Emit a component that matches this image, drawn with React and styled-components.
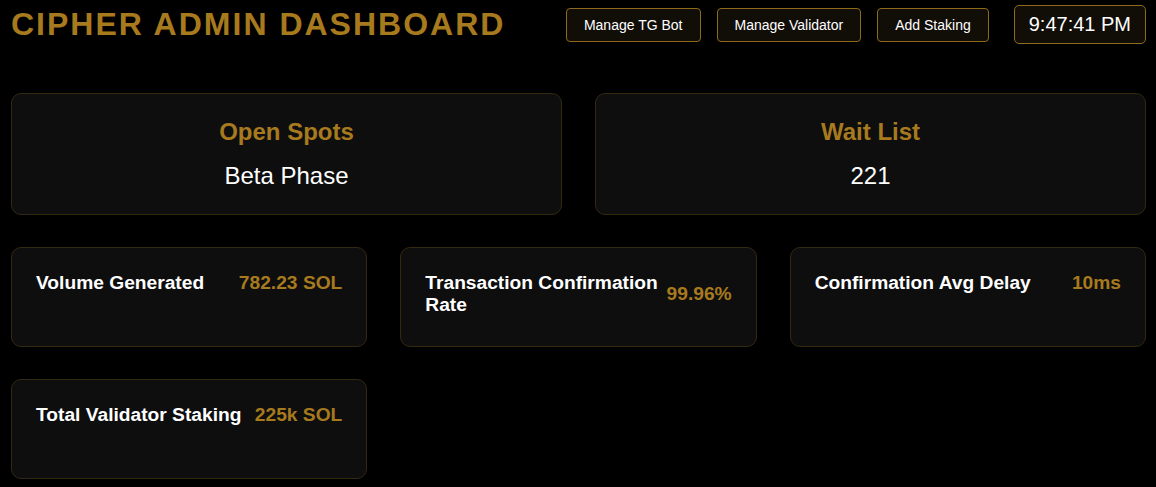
import React, { useState } from "react";
import styled, { createGlobalStyle } from "styled-components";

const GOLD = "#a87a1e";

const stats = [
  { label: "Volume Generated", value: "782.23 SOL" },
  { label: "Transaction Confirmation Rate", value: "99.96%" },
  { label: "Confirmation Avg Delay", value: "10ms" },
  { label: "Total Validator Staking", value: "225k SOL" },
];

export default function App() {
  const [time] = useState("9:47:41 PM");

  return (
    <>
      <GlobalStyle />
      <Page>
        <Header>
          <Title>CIPHER ADMIN DASHBOARD</Title>
          <Actions>
            <ActionButton>Manage TG Bot</ActionButton>
            <ActionButton>Manage Validator</ActionButton>
            <ActionButton>Add Staking</ActionButton>
            <Clock>{time}</Clock>
          </Actions>
        </Header>

        <SpotsRow>
          <SpotCard>
            <SpotTitle>Open Spots</SpotTitle>
            <SpotValue>Beta Phase</SpotValue>
          </SpotCard>
          <SpotCard>
            <SpotTitle>Wait List</SpotTitle>
            <SpotValue>221</SpotValue>
          </SpotCard>
        </SpotsRow>

        <StatsGrid>
          {stats.map((s) => (
            <StatCard key={s.label}>
              <StatRow>
                <StatLabel>{s.label}</StatLabel>
                <StatValue>{s.value}</StatValue>
              </StatRow>
            </StatCard>
          ))}
        </StatsGrid>
      </Page>
    </>
  );
}

const GlobalStyle = createGlobalStyle`
  * { box-sizing: border-box; }
  html, body {
    margin: 0;
    background: #000;
    color: #fff;
    font-family: "Liberation Sans", Arial, sans-serif;
  }
`;

const Page = styled.div`
  padding: 5px 10px 10px 11px;
`;

const Header = styled.header`
  display: flex;
  align-items: center;
  justify-content: space-between;
  height: 39px;
`;

const Title = styled.h1`
  margin: 0;
  font-size: 32px;
  font-weight: bold;
  letter-spacing: 2px;
  color: ${GOLD};
`;

const Actions = styled.div`
  display: flex;
  align-items: center;
  gap: 16px;
`;

const ActionButton = styled.button`
  font-family: inherit;
  font-size: 14px;
  line-height: 16px;
  color: #fff;
  background: #110d07;
  border: 1px solid #8f6a1d;
  border-radius: 4px;
  padding: 8px 17px;
  cursor: pointer;
`;

const Clock = styled.div`
  margin-left: 9px;
  font-size: 20px;
  line-height: 23px;
  color: #fff;
  background: #110d07;
  border: 1px solid #8f6a1d;
  border-radius: 5px;
  padding: 7px 14px;
`;

const SpotsRow = styled.div`
  display: grid;
  grid-template-columns: 1fr 1fr;
  gap: 33px;
  margin-top: 49px;
`;

const Card = styled.div`
  background: #0e0e0e;
  border: 1px solid #33290f;
  border-radius: 10px;
  padding: 24px;
`;

const SpotCard = styled(Card)`
  text-align: center;
`;

const SpotTitle = styled.h3`
  margin: 0 0 16px;
  font-size: 24px;
  font-weight: bold;
  color: ${GOLD};
`;

const SpotValue = styled.div`
  font-size: 24px;
  color: #fff;
`;

const StatsGrid = styled.div`
  display: grid;
  grid-template-columns: repeat(3, 1fr);
  column-gap: 33px;
  row-gap: 32px;
  margin-top: 32px;
`;

const StatCard = styled(Card)`
  min-height: 100px;
`;

const StatRow = styled.div`
  display: flex;
  align-items: center;
  justify-content: space-between;
  gap: 8px;
`;

const StatLabel = styled.div`
  font-size: 19.2px;
  line-height: 22px;
  font-weight: bold;
  color: #fff;
`;

const StatValue = styled.div`
  font-size: 19.2px;
  line-height: 22px;
  font-weight: bold;
  color: ${GOLD};
  white-space: nowrap;
`;
